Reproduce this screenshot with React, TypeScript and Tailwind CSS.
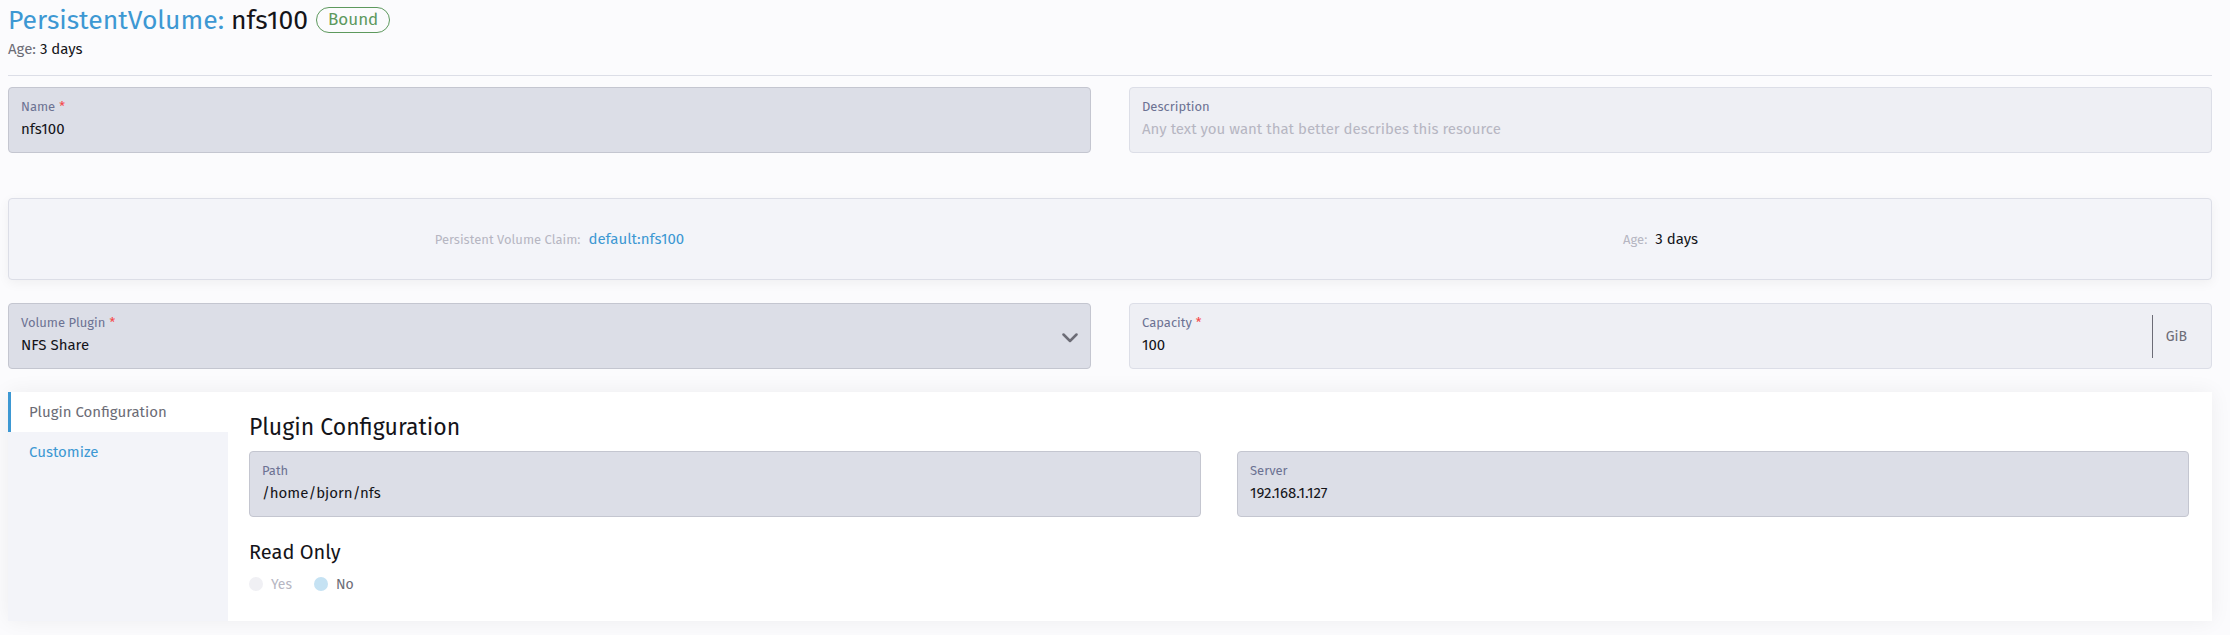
import { ReactNode } from "react";

function Field({
  label,
  required,
  value,
  placeholder,
  tone = "disabled",
  children,
}: {
  label: string;
  required?: boolean;
  value?: string;
  placeholder?: string;
  tone?: "disabled" | "light";
  children?: ReactNode;
}) {
  const box =
    tone === "disabled"
      ? "bg-[#dcdee7] border-[#c4c6d0]"
      : "bg-[#eeeff4] border-[#dcdee7]";
  return (
    <div className={`relative h-[66px] rounded border ${box} flex items-center`}>
      <div className="flex-1 px-3 pt-[11px] self-start">
        <div className="text-[13px] leading-4 text-[#6c7293]">
          {label}
          {required && <span className="ml-1 text-[#f64747]">*</span>}
        </div>
        <div className="mt-1 text-[15px] leading-5 text-[#141419]">
          {value ?? <span className="text-[#b6b6c2]">{placeholder}</span>}
        </div>
      </div>
      {children}
    </div>
  );
}

export default function App() {
  return (
    <div className="min-h-screen bg-[#fbfbfd] pl-2 pr-[18px] pt-[7px] font-['Fira_Sans',Roboto,sans-serif]">
      {/* header */}
      <div className="flex items-center h-[26px]">
        <h1 className="text-[26.5px] leading-none font-normal text-[#3d98d3]">
          PersistentVolume: <span className="text-[#141419]">nfs100</span>
        </h1>
        <span className="ml-2 h-[26px] flex items-center rounded-full border border-[#5d995d] px-[11px] text-[17px] text-[#5d995d]">
          Bound
        </span>
      </div>
      <div className="mt-[6px] h-5 text-[15px] leading-5 text-[#141419]">
        <span className="text-[#6c6c76]">Age:</span> 3 days
      </div>
      <div className="mt-4 border-t border-[#dcdee7]" />

      {/* name + description */}
      <div className="mt-[11px] grid grid-cols-2 gap-[38px]">
        <Field label="Name" required value="nfs100" />
        <Field
          label="Description"
          tone="light"
          placeholder="Any text you want that better describes this resource"
        />
      </div>

      {/* info box */}
      <div className="mt-[45px] h-[82px] rounded border border-[#dcdee7] bg-[#f3f4f9] shadow-[0_3px_12px_rgba(0,0,0,0.05)] grid grid-cols-2 items-center">
        <div className="flex justify-center items-baseline gap-2">
          <span className="text-[13px] text-[#b6b6c2]">Persistent Volume Claim:</span>
          <span className="text-[15px] text-[#3d98d3]">default:nfs100</span>
        </div>
        <div className="flex justify-center items-baseline gap-2">
          <span className="text-[13px] text-[#b6b6c2]">Age:</span>
          <span className="text-[15px] text-[#141419]">3 days</span>
        </div>
      </div>

      {/* plugin + capacity */}
      <div className="mt-[23px] grid grid-cols-2 gap-[38px]">
        <Field label="Volume Plugin" required value="NFS Share">
          <svg
            width="16"
            height="10"
            viewBox="0 0 16 10"
            fill="none"
            className="mr-3 mt-1"
          >
            <path
              d="M1.5 1.5L8 8L14.5 1.5"
              stroke="#6c6c76"
              strokeWidth="2.5"
              strokeLinecap="round"
              strokeLinejoin="round"
            />
          </svg>
        </Field>
        <Field label="Capacity" required value="100" tone="light">
          <div className="flex items-center h-[43px] border-l border-[#6c6c76] pl-[13px] pr-[24px] text-[14px] text-[#6c6c76]">
            GiB
          </div>
        </Field>
      </div>

      {/* plugin configuration panel */}
      <div className="mt-[23px] flex bg-white shadow-[0_0_20px_rgba(0,0,0,0.06)]">
        <div className="w-[220px] shrink-0 bg-[#f3f4f9]">
          <div className="h-10 flex items-center bg-white border-l-[3px] border-[#3d98d3] pl-[18px] text-[15px] text-[#6c6c76]">
            Plugin Configuration
          </div>
          <div className="h-10 flex items-center pl-[21px] text-[15px] text-[#3d98d3]">
            Customize
          </div>
        </div>
        <div className="flex-1 pl-[21px] pr-[23px] pt-[19px] pb-[27px]">
          <h2 className="text-[23px] leading-8 text-[#141419]">Plugin Configuration</h2>
          <div className="mt-2 grid grid-cols-2 gap-[36px]">
            <Field label="Path" value="/home/bjorn/nfs" />
            <Field label="Server" value="192.168.1.127" />
          </div>
          <h3 className="mt-[21px] text-[20px] leading-7 text-[#141419]">Read Only</h3>
          <div className="mt-2 flex items-center h-5 text-[14px]">
            <span className="w-[14px] h-[14px] rounded-full bg-[#f0f0f4]" />
            <span className="ml-2 text-[#b6b6c2]">Yes</span>
            <span className="ml-[22px] w-[14px] h-[14px] rounded-full bg-[#c5e2f3]" />
            <span className="ml-2 text-[#6c6c76]">No</span>
          </div>
        </div>
      </div>
    </div>
  );
}
